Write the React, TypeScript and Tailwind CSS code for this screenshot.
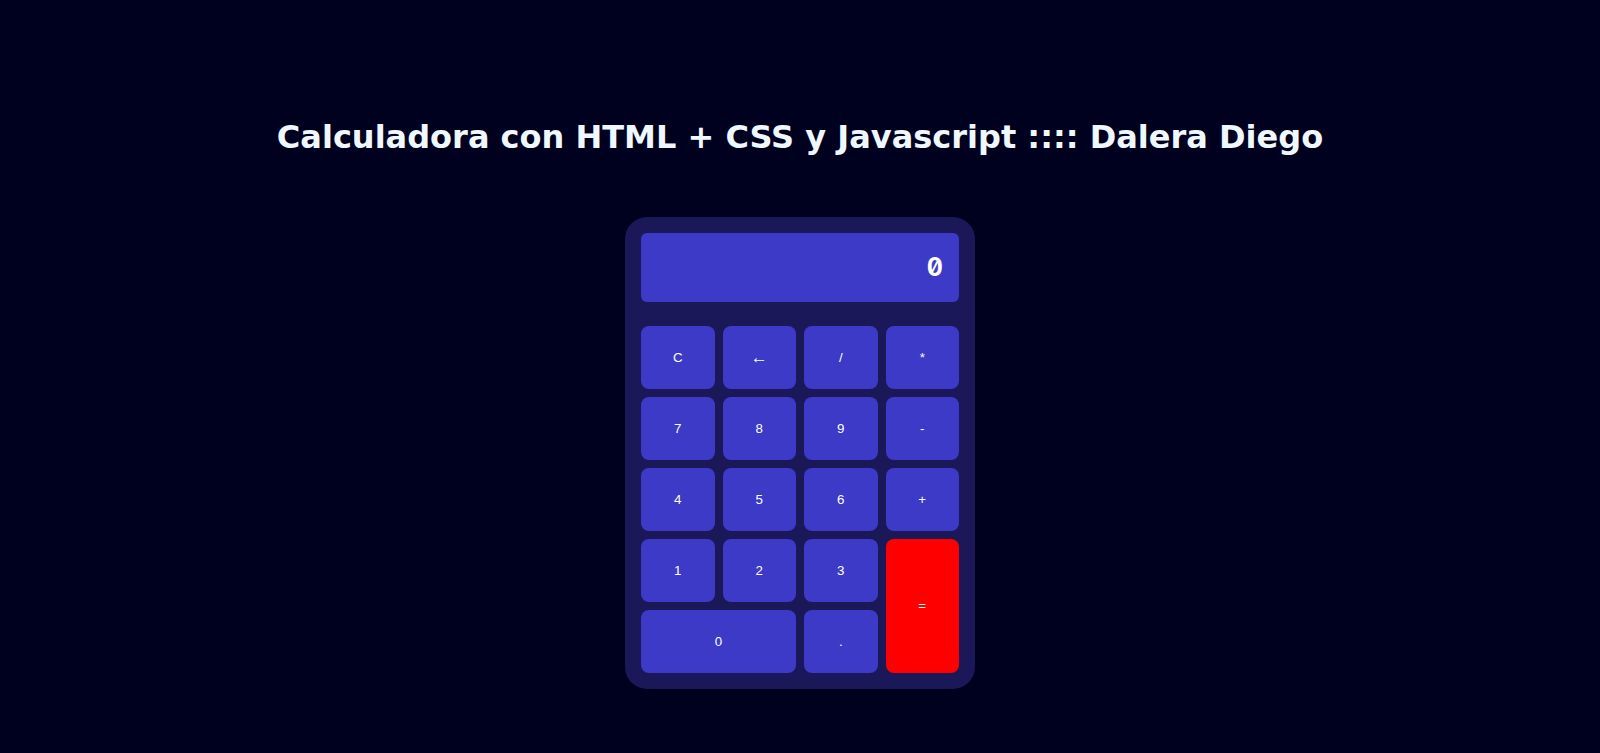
import React, { useState } from 'react';

const keys: { label: string; className?: string }[] = [
  { label: 'C' },
  { label: '←', className: "font-['DejaVu_Sans',sans-serif] text-[17px]" },
  { label: '/' },
  { label: '*' },
  { label: '7' },
  { label: '8' },
  { label: '9' },
  { label: '-' },
  { label: '4' },
  { label: '5' },
  { label: '6' },
  { label: '+' },
  { label: '1' },
  { label: '2' },
  { label: '3' },
  { label: '=', className: 'row-span-2 !bg-[#ff0000]' },
  { label: '0', className: 'col-span-2' },
  { label: '.' },
];

export default function App() {
  const [display] = useState('0');

  return (
    <div className="min-h-screen w-full bg-[#00001f] flex flex-col items-center">
      <h1 className="pt-[119px] text-[32px] font-bold text-[#f0f8ff] font-['DejaVu_Sans',Verdana,sans-serif] leading-[37px]">
        Calculadora con HTML + CSS y Javascript :::: Dalera Diego
      </h1>

      <div className="mt-[61px] w-[350px] p-4 rounded-[22px] bg-[#1a1858]">
        {/* pantalla */}
        <div className="h-[69px] rounded-md bg-[#3c3ac6] flex items-center justify-end px-4 text-[25px] font-bold text-white font-['Inter',monospace] [font-feature-settings:'zero','tnum']">
          {display}
        </div>

        <div className="mt-6 grid grid-cols-4 auto-rows-[63px] gap-2">
          {keys.map((k) => (
            <button
              key={k.label}
              className={
                "rounded-lg bg-[#3c3ac6] text-[13.33px] text-white font-['Liberation_Sans',Arial,sans-serif] flex items-center justify-center " +
                (k.className ?? '')
              }
            >
              {k.label}
            </button>
          ))}
        </div>
      </div>
    </div>
  );
}
